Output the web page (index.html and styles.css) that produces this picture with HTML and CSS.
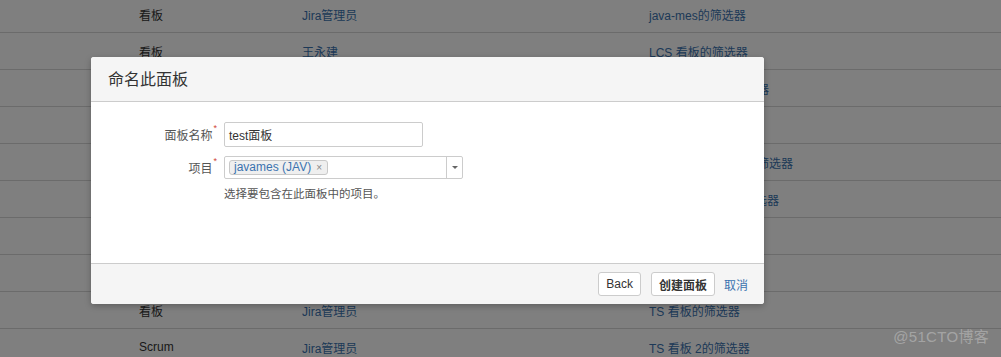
FILE: index.html
```html
<!DOCTYPE html>
<html lang="zh-CN">
<head>
<meta charset="utf-8">
<title>命名此面板</title>
<link rel="stylesheet" href="styles.css">
</head>
<body>
<div class="board-list">
  <div class="row"><span></span><span class="type">看板</span><a class="link">Jira管理员</a><a class="link">java-mes的筛选器</a></div>
  <div class="row"><span></span><span class="type">看板</span><a class="link">王永建</a><a class="link">LCS 看板的筛选器</a></div>
  <div class="row"><span></span><span class="type">看板</span><a class="link">Jira管理员</a><a class="link">javames 看板的筛选器</a></div>
  <div class="row"><span></span><span class="type">Scrum</span><a class="link">Jira管理员</a><a class="link">TS 看板的筛选器</a></div>
  <div class="row"><span></span><span class="type">看板</span><a class="link">王永建</a><a class="link">项目管理系统看板的筛选器</a></div>
  <div class="row"><span></span><span class="type">看板</span><a class="link">Jira管理员</a><a class="link">javames 看板 1的筛选器</a></div>
  <div class="row"><span></span><span class="type">看板</span><a class="link">Jira管理员</a><a class="link">MES 的筛选器</a></div>
  <div class="row"><span></span><span class="type">Scrum</span><a class="link">王永建</a><a class="link">LCS 的筛选器</a></div>
  <div class="row"><span></span><span class="type">看板</span><a class="link">Jira管理员</a><a class="link">TS 看板的筛选器</a></div>
  <div class="row"><span></span><span class="type">Scrum</span><a class="link">Jira管理员</a><a class="link">TS 看板 2的筛选器</a></div>
</div>

<div class="blanket"></div>

<section class="dialog">
  <header class="dialog-header">
    <h2 class="dialog-title">命名此面板</h2>
  </header>
  <div class="dialog-body">
    <div class="field-row">
      <label class="field-label">面板名称<span class="req">*</span></label>
      <div class="text-input">test面板</div>
    </div>
    <div class="field-row">
      <label class="field-label">项目<span class="req">*</span></label>
      <div class="multi-select">
        <div class="ms-items">
          <span class="tag">javames (JAV)<span class="tag-remove">×</span></span>
        </div>
        <div class="ms-toggle"><span class="caret"></span></div>
      </div>
    </div>
    <div class="field-row">
      <span class="field-label"></span>
      <div class="description">选择要包含在此面板中的项目。</div>
    </div>
  </div>
  <footer class="dialog-footer">
    <button class="btn">Back</button>
    <button class="btn btn-strong">创建面板</button>
    <a class="cancel">取消</a>
  </footer>
</section>

<div class="watermark">@51CTO博客</div>
</body>
</html>
```

FILE: styles.css
```css
html, body {
  margin: 0;
  padding: 0;
}
body {
  width: 1001px;
  height: 357px;
  overflow: hidden;
  background: #fff;
  font-family: "Liberation Sans", "Noto Sans CJK SC", sans-serif;
  font-size: 12px;
  color: #333;
  position: relative;
}

.board-list {
  margin-top: -4px;
}
.row {
  display: grid;
  grid-template-columns: 139px 163px 347px 1fr;
  height: 36px;
  align-items: center;
  border-bottom: 1px solid #d6d6d6;
  white-space: nowrap;
}
.type {
  color: #333;
}
.link {
  color: #3b73af;
}

.blanket {
  position: absolute;
  inset: 0;
  background: rgba(0, 0, 0, 0.5);
}

.dialog {
  position: absolute;
  left: 91px;
  top: 57px;
  width: 673px;
  height: 247px;
  background: #fff;
  border-radius: 3px;
  box-shadow: 0 2px 6px rgba(0, 0, 0, 0.25);
  display: flex;
  flex-direction: column;
  overflow: hidden;
}
.dialog-header {
  height: 45px;
  box-sizing: border-box;
  background: #f5f5f5;
  border-bottom: 1px solid #cccccc;
  display: flex;
  align-items: center;
  padding: 0 17px 2px;
}
.dialog-title {
  margin: 0;
  font-size: 16px;
  font-weight: normal;
  color: #333;
}

.dialog-body {
  flex: 1;
  padding-top: 20px;
  display: flex;
  flex-direction: column;
  gap: 9px;
}
.field-row {
  display: flex;
  align-items: center;
  gap: 6px;
}
.field-label {
  width: 127px;
  flex: none;
  text-align: right;
  font-size: 12px;
  color: #555;
  box-sizing: border-box;
  padding-right: 1px;
}
.req {
  color: #d04437;
  font-size: 9px;
  vertical-align: top;
  position: relative;
  top: -3px;
  margin-left: 1px;
}
.text-input {
  width: 199px;
  height: 25px;
  box-sizing: border-box;
  border: 1px solid #cccccc;
  border-radius: 2px;
  padding: 0 4px;
  display: flex;
  align-items: center;
  font-size: 12px;
  color: #333;
}
.multi-select {
  width: 239px;
  height: 23px;
  box-sizing: border-box;
  border: 1px solid #cccccc;
  border-radius: 2px;
  display: flex;
}
.ms-items {
  flex: 1;
  display: flex;
  align-items: center;
  padding-left: 4px;
}
.tag {
  display: inline-flex;
  align-items: center;
  height: 15px;
  box-sizing: border-box;
  border: 1px solid #c8c8c8;
  border-radius: 3px;
  background: #efefef;
  color: #3b73af;
  font-size: 12px;
  padding: 0 5px 0 4px;
  line-height: 13px;
}
.tag-remove {
  color: #888;
  font-size: 10px;
  margin-left: 5px;
}
.ms-toggle {
  width: 15px;
  border-left: 1px solid #cccccc;
  display: flex;
  align-items: center;
  justify-content: center;
}
.caret {
  width: 0;
  height: 0;
  border-left: 3px solid transparent;
  border-right: 3px solid transparent;
  border-top: 3px solid #666;
}
.description {
  font-size: 11.5px;
  color: #555;
  margin-top: -3px;
}

.dialog-footer {
  height: 41px;
  box-sizing: border-box;
  background: #f5f5f5;
  border-top: 1px solid #cccccc;
  display: flex;
  align-items: center;
  justify-content: flex-end;
  gap: 10px;
  padding: 0 16px 0 0;
}
.btn {
  height: 24px;
  box-sizing: border-box;
  border: 1px solid #cccccc;
  border-radius: 3px;
  background: #fff;
  color: #333;
  font-family: "Liberation Sans", "Noto Sans CJK SC", sans-serif;
  font-size: 12px;
  padding: 0 7px;
}
.btn-strong {
  font-weight: bold;
}
.cancel {
  color: #3b73af;
  font-size: 12px;
  margin-left: -1px;
}

.watermark {
  position: absolute;
  right: 12px;
  top: 328px;
  font-size: 15px;
  line-height: 18px;
  color: rgba(255, 255, 255, 0.3);
  letter-spacing: 0.3px;
}
```
